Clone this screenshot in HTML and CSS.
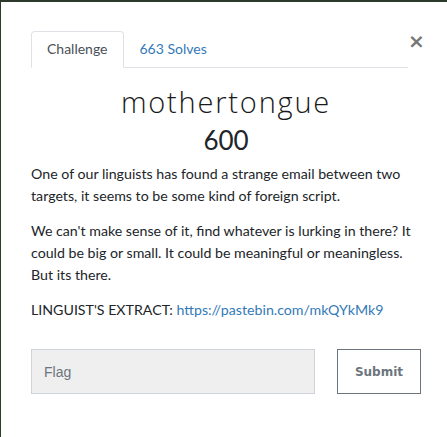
FILE: index.html
```html
<!DOCTYPE html>
<html>
<head>
<meta charset="utf-8">
<link rel="stylesheet" href="styles.css">
</head>
<body>
<div class="modal">
  <div class="header">
    <ul class="tabs">
      <li class="tab active">Challenge</li>
      <li class="tab link">663 Solves</li>
    </ul>
    <span class="close">&times;</span>
  </div>
  <h2 class="title">mothertongue</h2>
  <h3 class="points">600</h3>
  <div class="desc">
    <p>One of our linguists has found a strange email between two targets, it seems to be some kind of foreign script.</p>
    <p>We can't make sense of it, find whatever is lurking in there? It could be big or small. It could be meaningful or meaningless. But its there.</p>
    <p>LINGUIST'S EXTRACT: <a href="#">https://pastebin.com/mkQYkMk9</a></p>
  </div>
  <form class="flag-row">
    <input class="flag" type="text" placeholder="Flag">
    <button class="submit" type="button">Submit</button>
  </form>
</div>
</body>
</html>
```
FILE: styles.css
```css
html, body {
  margin: 0;
  padding: 0;
  background: #2b3a2b;
  height: 437px;
  overflow: hidden;
}
.modal {
  background: #fff;
  margin: 2px 0 0 1px;
  height: 435px;
  padding: 29px 26px 0 30px;
  box-sizing: border-box;
  font-family: Lato, "Liberation Sans", sans-serif;
  color: #212529;
}
.header {
  display: flex;
  align-items: flex-start;
}
.tabs {
  list-style: none;
  margin: 0;
  padding: 0;
  display: flex;
  flex: 1;
  border-bottom: 1px solid #dee2e6;
}
.tab {
  font-size: 14px;
  line-height: 20px;
  padding: 7px 15px 8px 15px;
  border: 1px solid transparent;
  border-top-left-radius: 4px;
  border-top-right-radius: 4px;
  margin-bottom: -1px;
}
.tab.active {
  color: #495057;
  border-color: #dee2e6 #dee2e6 #fff;
  background: #fff;
}
.tab.link {
  color: #337ab7;
  padding-left: 15px;
}
.close {
  width: 13px;
  margin-top: 0;
  font-family: "DejaVu Sans", sans-serif;
  font-size: 20px;
  font-weight: bold;
  line-height: 20px;
  color: #777;
  text-align: left;
}
.title {
  text-align: center;
  font-family: "Open Sans", sans-serif;
  font-weight: 300;
  font-size: 29px;
  letter-spacing: 1.8px;
  line-height: 34px;
  margin: 17px 0 0 0;
  color: #1a1a1a;
}
.points {
  text-align: center;
  font-weight: 400;
  font-size: 26px;
  line-height: 32px;
  margin: 5px 0 7px 0;
  color: #212529;
}
.desc p {
  font-size: 14.2px;
  line-height: 22px;
  margin: 0 0 13px 0;
  color: #212529;
}
.desc a {
  color: #337ab7;
  text-decoration: none;
}
.flag-row {
  display: grid;
  grid-template-columns: 1fr 84px;
  gap: 22px;
  margin-top: 28px;
}
.flag {
  height: 45px;
  box-sizing: border-box;
  background: #efefef;
  border: 1px solid #ced4da;
  padding: 0 12px;
  font-family: "Liberation Sans", Arial, sans-serif;
  font-size: 14px;
  color: #495057;
  outline: none;
}
.flag::placeholder {
  color: #6c757d;
}
.submit {
  height: 45px;
  box-sizing: border-box;
  background: #fff;
  border: 1px solid #6c757d;
  font-family: "DejaVu Sans", sans-serif;
  font-weight: bold;
  font-size: 12px;
  color: #6c757d;
  padding: 0;
}
```
